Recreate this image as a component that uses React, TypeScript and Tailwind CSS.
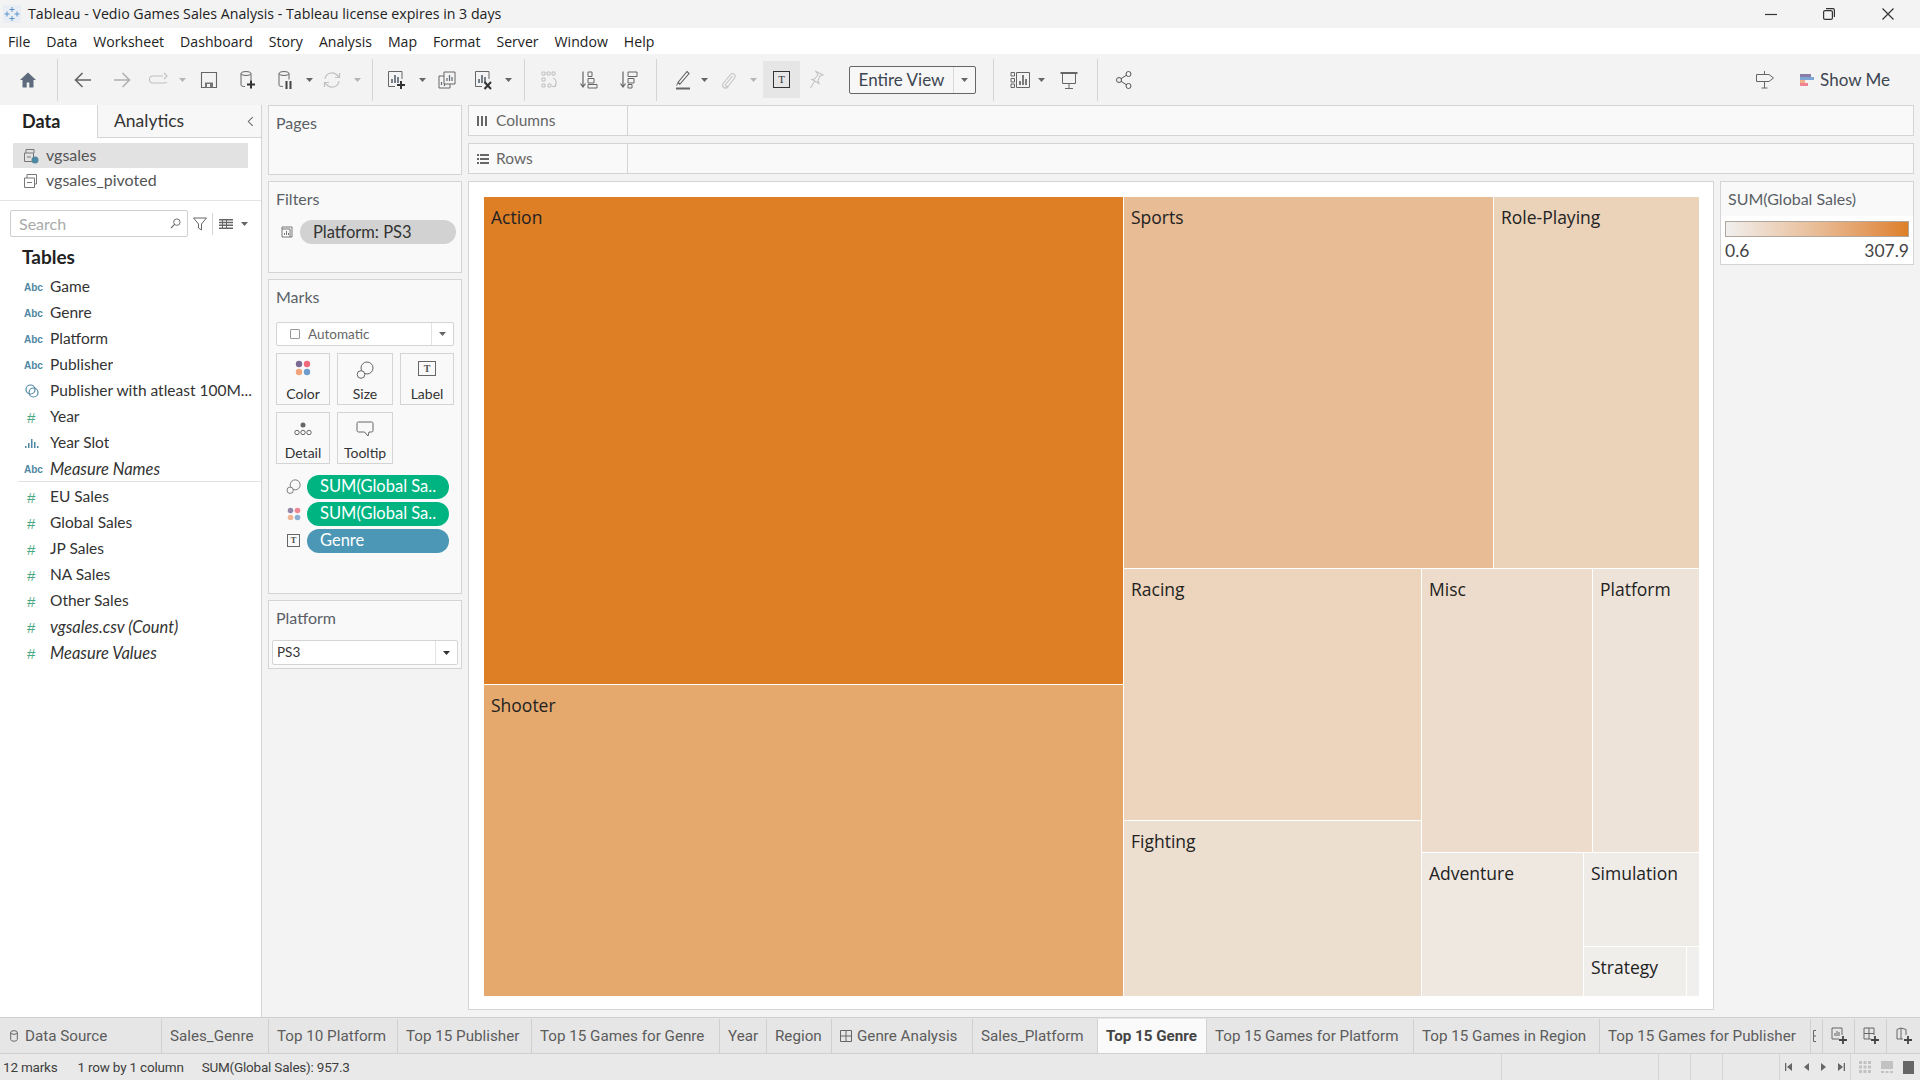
import { ReactNode } from "react";

const book = "font-['Lato','Liberation_Sans',sans-serif]";

const Icon = ({ className = "", children, box = "0 0 20 20" }: { className?: string; children: ReactNode; box?: string }) => (
  <svg viewBox={box} fill="none" className={`shrink-0 ${className}`}>
    {children}
  </svg>
);

const Caret = ({ className = "", light = false }: { className?: string; light?: boolean }) => (
  <svg viewBox="0 0 7 4" className={`h-[4px] w-[7px] shrink-0 ${className}`}>
    <path d="M0 0h7L3.500 4z" fill={light ? "#b5b5b5" : "#666"} />
  </svg>
);

const Divider = ({ className = "" }: { className?: string }) => <div className={`h-[42px] w-px shrink-0 bg-[#d4d4d4] ${className}`} />;

const Toolbar = () => (
  <div className="flex h-[51px] items-center bg-[#f3f3f3] pr-[30px]">
    <Icon className="ml-[18px] h-5 w-5">
      <path d="M10 2.500 2 10h2.500v7.500h4.200v-5h2.600v5h4.200V10H18z" fill="#5d6b7c" />
    </Icon>
    <Divider className="ml-[19px]" />
    <Icon className="ml-[15px] h-5 w-5">
      <path d="M18 10H3M9.500 3 2.500 10l7 7" stroke="#666" strokeWidth="1.600" />
    </Icon>
    <Icon className="ml-[19px] h-5 w-5">
      <path d="M2 10h15M10.500 3l7 7-7 7" stroke="#b0b0b0" strokeWidth="1.600" />
    </Icon>
    <Icon className="ml-[17px] h-5 w-5">
      <path d="M14 6H4a3 3 0 0 0 0 7h12a3 3 0 0 0 2-1M15 3l3 3-3 3" stroke="#c0c0c0" strokeWidth="1.100" />
    </Icon>
    <Caret light className="ml-[10px]" />
    <Icon className="ml-[13px] h-5 w-5">
      <path d="M2.500 2.500h15v15h-15z" stroke="#666" strokeWidth="1.100" />
      <path d="M6 12.500h8v5H6z" fill="#777" />
      <path d="M8 14h3v3H8z" fill="#f3f3f3" />
    </Icon>
    <Icon className="ml-[19px] h-5 w-5">
      <ellipse cx="8" cy="3.500" rx="5" ry="2" stroke="#666" />
      <path d="M3 3.500v11.500c0 1 1.500 1.500 4 1.500M13 3.500v7" stroke="#666" />
      <path d="M13 10.500v8M9 14.500h8" stroke="#333" strokeWidth="2" />
    </Icon>
    <Icon className="ml-[18px] h-5 w-5">
      <ellipse cx="8" cy="3.500" rx="5" ry="2" stroke="#666" />
      <path d="M3 3.500v11.500c0 1 1.500 1.500 4 1.500M13 3.500v6" stroke="#666" />
      <path d="M10.500 11v8M14.500 11v8" stroke="#444" strokeWidth="2" />
    </Icon>
    <Caret className="ml-[10px]" />
    <Icon className="ml-[9px] h-5 w-5">
      <path d="M3 9a7 7 0 0 1 12-4l2 2M17 11a7 7 0 0 1-12 4l-2-2" stroke="#c0c0c0" strokeWidth="1.200" />
      <path d="M17.500 3v4.500H13M2.500 17v-4.500H7" stroke="#c0c0c0" strokeWidth="1.200" />
    </Icon>
    <Caret light className="ml-[12px]" />
    <Divider className="ml-[11px]" />
    <Icon className="ml-[14px] h-5 w-5">
      <path d="M15 9V1.500H1.500v15H8" stroke="#666" />
      <path d="M5 13V9M8 13V5M11 13V7" stroke="#4e5a66" strokeWidth="1.500" />
      <path d="M14 11v8M10 15h8" stroke="#333" strokeWidth="2" />
    </Icon>
    <Caret className="ml-[12px]" />
    <Icon className="ml-[11px] h-5 w-5">
      <path d="M7 6h-5v12h11v-4" stroke="#666" />
      <path d="M7 2h11v12H7z" stroke="#666" />
      <path d="M10 11V8M12.500 11V5M15 11V7M4.500 15v-3M7.500 16v-2" stroke="#5c6873" strokeWidth="1.200" />
    </Icon>
    <Icon className="ml-[17px] h-5 w-5">
      <path d="M15 9V1.500H1.500v15H8" stroke="#666" />
      <path d="M5 13V9M8 13V5M11 13V7" stroke="#4e5a66" strokeWidth="1.500" />
      <path d="m10.500 12 6.500 7M17 12l-6.500 7" stroke="#333" strokeWidth="2" />
    </Icon>
    <Caret className="ml-[11px]" />
    <Divider className="ml-[12px]" />
    <Icon className="ml-[15px] h-5 w-5">
      <path d="M2 2h3v3H2zM7 2h3v3H7zM12 2h3v3h-3zM2 8h3v3H2zM2 14h3v3H2zM8 14h3v3H8z" stroke="#bbb" strokeWidth="0.900" />
      <path d="M13 8c3 1 4 4 2 8M16 14l-1 3-3-1" stroke="#bbb" />
    </Icon>
    <Icon className="ml-[19px] h-5 w-5">
      <path d="M4 1.500v15M1.500 13.500 4 17l2.500-3.500" stroke="#666" strokeWidth="1.200" />
      <path d="M9 2h4v4.500H9zM9 8.500h6V13H9zM9 14.500h9V18H9z" stroke="#666" />
    </Icon>
    <Icon className="ml-[20px] h-5 w-5">
      <path d="M4 1.500v15M1.500 13.500 4 17l2.500-3.500" stroke="#666" strokeWidth="1.200" />
      <path d="M9 2h9v4.500H9zM9 8.500h6V13H9zM9 14.500h4V18H9z" stroke="#666" />
    </Icon>
    <Divider className="ml-[17px]" />
    <Icon className="ml-[16px] h-5 w-5">
      <path d="m14 1.500 2 2L7 14l-2-1.500z" stroke="#666" strokeWidth="1.100" />
      <path d="M3.500 15.500 5 13l2 1.500" stroke="#666" />
      <path d="M3 17.500h14v2H3z" fill="#666" />
    </Icon>
    <Caret className="ml-[8px]" />
    <Icon className="ml-[11px] h-5 w-5">
      <path d="M13.500 6 7 14c-1.500 2 1 3.500 2.500 2l6-8c2.500-3-1.500-6-4-3.500L4.500 13c-2.500 3 1 7 4.500 4" stroke="#c4c4c4" strokeWidth="1.100" />
    </Icon>
    <Caret light className="ml-[11px]" />
    <div className="ml-[6px] flex h-[37px] w-[37px] shrink-0 items-center justify-center bg-[#e6e6e6]">
      <div className="flex h-[17px] w-[17px] items-center justify-center border border-[#333] font-['Liberation_Serif',serif] text-[11px] leading-none text-[#333]">T</div>
    </div>
    <Icon className="ml-[7px] h-5 w-5">
      <path d="M9 1.500 16 5l-3 1-2 5 1 2.500-7-4 2.500-.5L11 5zM7.500 11.500 3.500 18" stroke="#c4c4c4" strokeWidth="1.100" />
    </Icon>
    <div className="ml-[22px] flex h-[28px] w-[127px] shrink-0 items-center rounded-[2px] border border-[#666] bg-[#f7f7f7]">
      <span className={`flex-1 text-center text-[17px] text-[#3d4650] ${book}`}>Entire View</span>
      <span className="flex h-full w-[22px] items-center justify-center border-l border-[#d9d9d9]">
        <Caret />
      </span>
    </div>
    <Divider className="ml-[17px]" />
    <Icon className="ml-[16px] h-5 w-5">
      <path d="M1 2.500h3.500V6H1zM1 8.500h3.500V12H1zM1 14h3.500v3.500H1zM6.500 2.500h13v15h-13z" stroke="#666" />
      <path d="M10 15v-4M13 15V5M16 15V9" stroke="#555" strokeWidth="1.500" />
    </Icon>
    <Caret className="ml-[8px]" />
    <Icon className="ml-[14px] h-5 w-5">
      <path d="M1.500 2h17v2h-17z" fill="#666" />
      <path d="M3.500 4v9.500h13V4M10 13.500v5M6 18.500h8" stroke="#666" />
    </Icon>
    <Divider className="ml-[18px]" />
    <Icon className="ml-[16px] h-5 w-5">
      <circle cx="14.500" cy="4" r="2.500" stroke="#555" />
      <circle cx="5" cy="10" r="2.500" stroke="#555" />
      <circle cx="14.500" cy="16" r="2.500" stroke="#555" />
      <path d="m7 8.700 5.500-3.500M7 11.300l5.500 3.500" stroke="#555" />
    </Icon>
    <Icon className="ml-auto h-5 w-5">
      <path d="M1.500 4.500H14l4.500 3.500-4.500 3.500H1.500z" stroke="#666" />
      <path d="M9.500 1v3.500M9.500 11.500V18M6.500 18h6" stroke="#666" />
    </Icon>
    <div className="ml-[25px] flex items-center gap-[6px]">
      <div className="flex w-[14px] flex-col">
        <div className="h-[3px] w-[11px] bg-[#8a7ca8]" />
        <div className="h-[3px] w-[14px] bg-[#7ea6d4]" />
        <div className="h-[3px] w-[5px] bg-[#f0b08a]" />
        <div className="h-[3px] w-[8px] bg-[#ef8391]" />
      </div>
      <span className={`text-[17px] text-[#3d4650] ${book}`}>Show Me</span>
    </div>
  </div>
);

const AbcIcon = () => <span className="w-[16px] font-['Liberation_Sans',sans-serif] text-[10px] font-bold text-[#4e87a2]">Abc</span>;
const HashIcon = () => <span className="w-[16px] pl-[3px] font-['Liberation_Sans',sans-serif] text-[15px] leading-none text-[#4aa882]">#</span>;

const fieldsTop = [
  { label: "Game", icon: <AbcIcon /> },
  { label: "Genre", icon: <AbcIcon /> },
  { label: "Platform", icon: <AbcIcon /> },
  { label: "Publisher", icon: <AbcIcon /> },
  {
    label: "Publisher with atleast 100M...",
    icon: (
      <svg viewBox="0 0 16 16" fill="none" className="h-[16px] w-[16px]">
        <circle cx="6.500" cy="6.500" r="4.500" stroke="#4e87a2" strokeWidth="1.200" />
        <circle cx="9.500" cy="9.500" r="4.500" stroke="#4e87a2" strokeWidth="1.200" />
      </svg>
    ),
  },
  { label: "Year", icon: <HashIcon /> },
  {
    label: "Year Slot",
    icon: (
      <svg viewBox="0 0 16 16" fill="#4e87a2" className="h-[16px] w-[16px]">
        <path d="M1 11h1.500v2H1zM4 8h1.500v5H4zM7 4h1.500v9H7zM10 7h1.500v6H10zM13 11h1.500v2H13z" />
      </svg>
    ),
  },
  { label: "Measure Names", icon: <AbcIcon />, italic: true },
];

const fieldsBottom = [
  { label: "EU Sales" },
  { label: "Global Sales" },
  { label: "JP Sales" },
  { label: "NA Sales" },
  { label: "Other Sales" },
  { label: "vgsales.csv (Count)", italic: true },
  { label: "Measure Values", italic: true },
];

const FieldRow = ({ label, icon, italic }: { label: string; icon: ReactNode; italic?: boolean }) => (
  <div className="flex h-[26px] items-center pl-[24px]">
    <div className="flex w-[26px] items-center">{icon}</div>
    <span className={`truncate text-[#333] ${italic ? "text-[16.500px] italic" : "text-[15.500px]"}`}>{label}</span>
  </div>
);

const DataPane = () => (
  <aside className={`flex w-[262px] shrink-0 flex-col border-r border-[#d4d4d4] bg-white ${book}`}>
    <div className="flex h-[33px] shrink-0">
      <div className="flex w-[97px] items-center pl-[22px] text-[18px] font-bold text-[#222]">Data</div>
      <div className="flex flex-1 items-center justify-between border-b border-l border-[#d4d4d4] bg-[#f7f7f7] pr-[7px] pl-[16px] text-[17.500px] text-[#333]">
        Analytics
        <svg viewBox="0 0 8 12" fill="none" className="h-[11px] w-[7px]">
          <path d="M6.500 1 1.500 6l5 5" stroke="#666" strokeWidth="1.200" />
        </svg>
      </div>
    </div>
    <div className="mx-[13px] mt-[5px] flex h-[25px] items-center bg-[#e2e2e2] pl-[10px] text-[16px] text-[#555]">
      <svg viewBox="0 0 16 16" fill="none" className="mr-[7px] h-[16px] w-[16px]">
        <path d="M3 5V1.500h8V5M1.500 5h9v8.500h-9zM4 9h4" stroke="#777" />
        <circle cx="12" cy="12" r="3.500" fill="#4e87a2" />
      </svg>
      <span className="mt-[-1px]">vgsales</span>
    </div>
    <div className="mx-[13px] flex h-[25px] items-center pl-[10px] text-[16px] text-[#555]">
      <svg viewBox="0 0 16 16" fill="none" className="mr-[7px] h-[16px] w-[16px]">
        <path d="M4 5V1.500h9.500V11h-2M1.500 5h10v9.500h-10zM4 9.500h5" stroke="#777" />
      </svg>
      <span className="mt-[-1px]">vgsales_pivoted</span>
    </div>
    <div className="mt-[7px] border-t border-[#e3e3e3]" />
    <div className="mt-[9px] flex items-center pl-[10px]">
      <div className="flex h-[27px] w-[178px] items-center justify-between rounded-[2px] border border-[#cfcfcf] pr-[6px] pl-[8px] text-[16px] text-[#aaa]">
        Search
        <svg viewBox="0 0 12 12" fill="none" className="h-[11px] w-[11px]">
          <circle cx="7.500" cy="4.500" r="3.500" stroke="#666" />
          <path d="M5 7 1 11" stroke="#666" strokeWidth="1.300" />
        </svg>
      </div>
      <svg viewBox="0 0 14 14" fill="none" className="ml-[5px] h-[14px] w-[14px]">
        <path d="M.5 1h13L8.500 7v6l-3-2V7z" stroke="#666" />
      </svg>
      <div className="ml-[5px] h-[22px] w-px bg-[#d4d4d4]" />
      <svg viewBox="0 0 14 10" fill="#666" className="ml-[6px] h-[10px] w-[14px]">
        <path d="M0 0h14v1.500H0zM0 2.800h14v1.500H0zM0 5.600h14v1.500H0zM0 8.400h14V10H0zM3 0h1v10H3zM7 0h1v10H7z" />
      </svg>
      <Caret className="ml-[8px]" />
    </div>
    <div className="mt-[8px] pl-[22px] text-[19px] leading-[24px] font-bold text-[#222]">Tables</div>
    <div className="mt-[5px]">
      {fieldsTop.map((f) => (
        <FieldRow key={f.label} label={f.label} icon={f.icon} italic={f.italic} />
      ))}
    </div>
    <div className="mt-[-1px] ml-[18px] border-t border-[#e3e3e3]" />
    <div className="mt-[2px]">
      {fieldsBottom.map((f) => (
        <FieldRow key={f.label} label={f.label} icon={<HashIcon />} italic={f.italic} />
      ))}
    </div>
  </aside>
);

const CardTitle = ({ children }: { children: ReactNode }) => <div className="px-[7px] text-[16px] leading-[20px] text-[#5a5f66]">{children}</div>;

const markButton = "flex h-[52px] flex-col items-center justify-between border border-[#d4d4d4] pt-[6px] pb-[1px] text-[14px] leading-[18px] text-[#333]";

const ColorDots = ({ className = "" }: { className?: string }) => (
  <svg viewBox="0 0 16 16" className={className}>
    <circle cx="4" cy="4" r="3.200" fill="#7b6a94" />
    <circle cx="12" cy="4" r="3.200" fill="#ee6a7c" />
    <circle cx="4" cy="12" r="3.200" fill="#f2a57c" />
    <circle cx="12" cy="12" r="3.200" fill="#6f9ccb" />
  </svg>
);

const SizeCircles = ({ className = "" }: { className?: string }) => (
  <svg viewBox="0 0 18 18" fill="none" className={className}>
    <circle cx="11" cy="7" r="6" stroke="#666" />
    <circle cx="5" cy="13.500" r="3.800" stroke="#666" fill="#f9f9f9" />
  </svg>
);

const LabelBox = ({ className = "" }: { className?: string }) => (
  <div className={`flex items-center justify-center border border-[#666] font-['Liberation_Serif',serif] leading-none font-bold text-[#555] ${className}`}>T</div>
);

const Pill = ({ icon, label, color }: { icon: ReactNode; label: string; color: string }) => (
  <div className="flex h-[27px] items-center">
    <div className="flex w-[38px] justify-center pl-[11px]">{icon}</div>
    <div className={`flex h-[24px] w-[142px] items-center rounded-full pl-[13px] text-[16.500px] text-white ${color}`}>{label}</div>
  </div>
);

const Cards = () => (
  <div className={`flex w-[194px] shrink-0 flex-col ${book}`}>
    <section className="h-[70px] border border-[#d4d4d4] bg-[#f9f9f9] pt-[7px]">
      <CardTitle>Pages</CardTitle>
    </section>
    <section className="mt-[6px] h-[92px] border border-[#d4d4d4] bg-[#f9f9f9] pt-[7px]">
      <CardTitle>Filters</CardTitle>
      <div className="mt-[11px] flex items-center">
        <svg viewBox="0 0 12 12" fill="none" className="ml-[12px] h-[12px] w-[12px]">
          <path d="M1 3V1h10v10H9M1 3h8v8H1zM3.500 9V7M5.500 9V5M7.500 9V7" stroke="#777" />
        </svg>
        <div className="ml-[7px] flex h-[24px] w-[156px] items-center rounded-full bg-[#d2d2d2] pl-[13px] text-[16.500px] text-[#333]">Platform: PS3</div>
      </div>
    </section>
    <section className="mt-[6px] h-[315px] border border-[#d4d4d4] bg-[#f9f9f9] pt-[7px]">
      <CardTitle>Marks</CardTitle>
      <div className="mx-[7px] mt-[15px] flex h-[24px] items-center rounded-[2px] border border-[#d4d4d4] bg-white text-[13.500px] text-[#666]">
        <div className="ml-[13px] h-[10px] w-[10px] rounded-[1px] border border-[#999]" />
        <span className="ml-[8px] flex-1">Automatic</span>
        <span className="flex h-full w-[22px] items-center justify-center border-l border-[#e3e3e3]">
          <Caret />
        </span>
      </div>
      <div className="mx-[7px] mt-[7px] grid grid-cols-[54px_56px_54px] gap-x-[7px] gap-y-[7px]">
        <div className={markButton}>
          <ColorDots className="h-[16px] w-[16px]" />
          Color
        </div>
        <div className={markButton}>
          <SizeCircles className="mt-[1px] h-[18px] w-[18px]" />
          Size
        </div>
        <div className={markButton}>
          <LabelBox className="mt-[1px] h-[15px] w-[18px] text-[10px]" />
          Label
        </div>
        <div className={markButton}>
          <svg viewBox="0 0 20 14" fill="none" className="mt-[3px] h-[14px] w-[20px]">
            <circle cx="10" cy="3" r="2.500" fill="#666" />
            <circle cx="4" cy="10.500" r="2.200" stroke="#666" />
            <circle cx="10" cy="10.500" r="2.200" stroke="#666" />
            <circle cx="16" cy="10.500" r="2.200" stroke="#666" />
          </svg>
          Detail
        </div>
        <div className={markButton}>
          <svg viewBox="0 0 18 16" fill="none" className="mt-[2px] h-[16px] w-[18px]">
            <path d="M2.500 1h13A1.500 1.500 0 0 1 17 2.500v7a1.500 1.500 0 0 1-1.500 1.500H13l-1 4-3.500-4h-6A1.500 1.500 0 0 1 1 9.500v-7A1.500 1.500 0 0 1 2.500 1z" stroke="#666" />
          </svg>
          Tooltip
        </div>
      </div>
      <div className="mt-[9px]">
        <Pill icon={<SizeCircles className="h-[15px] w-[15px]" />} label="SUM(Global Sa.." color="bg-[#00b482]" />
        <Pill icon={<ColorDots className="h-[14px] w-[14px] opacity-80" />} label="SUM(Global Sa.." color="bg-[#00b482]" />
        <Pill icon={<LabelBox className="h-[13px] w-[13px] text-[9px]" />} label="Genre" color="bg-[#4b97b5]" />
      </div>
    </section>
    <section className="mt-[6px] h-[69px] border border-[#d4d4d4] bg-[#f9f9f9] pt-[7px]">
      <CardTitle>Platform</CardTitle>
      <div className="mx-[3px] mt-[12px] flex h-[25px] items-center rounded-[2px] border border-[#d4d4d4] bg-white pl-[4px] text-[13.500px] text-[#333]">
        <span className="flex-1">PS3</span>
        <span className="flex h-full w-[22px] items-center justify-center border-l border-[#e3e3e3]">
          <Caret className="brightness-50" />
        </span>
      </div>
    </section>
  </div>
);

const Shelf = ({ label, icon, className = "" }: { label: string; icon: ReactNode; className?: string }) => (
  <div className={`flex h-[31px] border border-[#d4d4d4] bg-[#f9f9f9] ${className}`}>
    <div className={`flex w-[159px] items-center border-r border-[#d4d4d4] pt-[1px] pl-[8px] text-[15.500px] text-[#666] ${book}`}>
      <div className="flex w-[19px] items-center">{icon}</div>
      {label}
    </div>
  </div>
);

const Node = ({ label, className }: { label?: string; className: string }) => (
  <div className={`pt-[7px] pl-[7px] font-['Open_Sans',sans-serif] text-[17.500px] leading-[26px] text-[#222] ${className}`}>{label}</div>
);

const Treemap = () => (
  <div className="flex h-[799px] w-[1215px] gap-px">
    <div className="flex w-[639px] flex-col gap-px">
      <Node label="Action" className="h-[487px] bg-[#de7f26]" />
      <Node label="Shooter" className="flex-1 bg-[#e5a96e]" />
    </div>
    <div className="flex flex-1 flex-col gap-px">
      <div className="flex h-[371px] gap-px">
        <Node label="Sports" className="w-[369px] bg-[#e8bc95]" />
        <Node label="Role-Playing" className="flex-1 bg-[#ebd3ba]" />
      </div>
      <div className="flex flex-1 gap-px">
        <div className="flex w-[297px] flex-col gap-px">
          <Node label="Racing" className="h-[251px] bg-[#ecd5bc]" />
          <Node label="Fighting" className="flex-1 bg-[#eddfd0]" />
        </div>
        <div className="flex flex-1 flex-col gap-px">
          <div className="flex h-[283px] gap-px">
            <Node label="Misc" className="w-[170px] bg-[#eddccb]" />
            <Node label="Platform" className="flex-1 bg-[#eee3d8]" />
          </div>
          <div className="flex flex-1 gap-px">
            <Node label="Adventure" className="w-[161px] bg-[#efe8e1]" />
            <div className="flex flex-1 flex-col gap-px">
              <Node label="Simulation" className="h-[93px] bg-[#efece8]" />
              <div className="flex flex-1 gap-px">
                <Node label="Strategy" className="w-[102px] bg-[#f0eeeb]" />
                <Node className="flex-1 bg-[#f0efee]" />
              </div>
            </div>
          </div>
        </div>
      </div>
    </div>
  </div>
);

const Legend = () => (
  <section className={`ml-[6px] h-[84px] w-[194px] shrink-0 border border-[#d4d4d4] bg-white ${book}`}>
    <div className="flex h-[34px] items-center bg-[#f9f9f9] pl-[7px] text-[16px] text-[#5a5f66]">SUM(Global Sales)</div>
    <div className="mx-[4px] mt-[5px] h-[16px] border border-[#b0a89e] bg-gradient-to-r from-[#f0efee] via-[#e8bc95] to-[#de7f26]" />
    <div className="mx-[4px] mt-[4px] flex justify-between text-[17.500px] leading-[20px] text-[#444]">
      <span>0.6</span>
      <span>307.9</span>
    </div>
  </section>
);

const tabs = [
  { label: "Sales_Genre", w: "w-[107px]" },
  { label: "Top 10 Platform", w: "w-[129px]" },
  { label: "Top 15 Publisher", w: "w-[134px]" },
  { label: "Top 15 Games for Genre", w: "w-[188px]" },
  { label: "Year", w: "w-[47px]" },
  { label: "Region", w: "w-[65px]" },
  { label: "Genre Analysis", w: "w-[141px]", grid: true },
  { label: "Sales_Platform", w: "w-[125px]" },
  { label: "Top 15 Genre", w: "w-[109px]", active: true },
  { label: "Top 15 Games for Platform", w: "w-[207px]" },
  { label: "Top 15 Games in Region", w: "w-[186px]" },
  { label: "Top 15 Games for Publisher", w: "w-[211px]" },
];

const TabBar = () => (
  <div className="flex h-[37px] shrink-0 border-y border-[#d0d0d0] bg-[#e6e6e6] pt-px font-['Roboto',sans-serif] text-[15.200px] text-[#5c5c5c]">
    <div className="flex w-[162px] items-center gap-[7px] border-r border-[#d0d0d0] pl-[10px]">
      <svg viewBox="0 0 8 12" fill="none" className="h-[12px] w-[8px]">
        <ellipse cx="4" cy="2.500" rx="3.300" ry="1.800" stroke="#666" />
        <path d="M.7 2.500v7c0 2.200 6.600 2.200 6.600 0v-7" stroke="#666" />
      </svg>
      Data Source
    </div>
    {tabs.map((t) => (
      <div
        key={t.label}
        className={`flex items-center gap-[5px] border-r border-[#d0d0d0] pl-[8px] ${t.w} ${t.active ? "bg-[#fafafa] font-bold text-[#444]" : ""}`}
      >
        {t.grid && (
          <svg viewBox="0 0 12 12" fill="none" className="h-[12px] w-[12px]">
            <path d="M.5.500h11v11H.5zM6 .5v11M.5 6h11" stroke="#666" />
          </svg>
        )}
        {t.label}
      </div>
    ))}
    <div className="flex w-[12px] items-center border-r border-[#d0d0d0] pl-[2px]">
      <svg viewBox="0 0 3 12" fill="none" className="h-[12px] w-[3px]">
        <path d="M3 .5H.5v11H3M.5 6H3" stroke="#666" />
      </svg>
    </div>
    <div className="flex w-[32px] items-center justify-center border-r border-[#d0d0d0] pl-[2px]">
      <svg viewBox="0 0 18 18" fill="none" className="h-[18px] w-[18px]">
        <path d="M11 8V1H1v11h7" stroke="#666" />
        <path d="M4 9V6M6 9V4M8 9V5" stroke="#666" />
        <path d="M12 9v8M8 13h8" stroke="#444" strokeWidth="1.800" />
      </svg>
    </div>
    <div className="flex w-[32px] items-center justify-center border-r border-[#d0d0d0] pl-[2px]">
      <svg viewBox="0 0 18 18" fill="none" className="h-[18px] w-[18px]">
        <path d="M11 8V1H1v11h7M1 6.500h10M6 1v11" stroke="#666" />
        <path d="M12 9v8M8 13h8" stroke="#444" strokeWidth="1.800" />
      </svg>
    </div>
    <div className="flex flex-1 items-center justify-center pl-[2px]">
      <svg viewBox="0 0 18 18" fill="none" className="h-[18px] w-[18px]">
        <path d="M1 2.500 5 1l5 1.500V8M1 2.500V12h6M5 1v11" stroke="#666" />
        <path d="M12 9v8M8 13h8" stroke="#444" strokeWidth="1.800" />
      </svg>
    </div>
  </div>
);

const StatusBar = () => (
  <div className="flex h-[26px] shrink-0 items-center bg-[#e9e9e9] font-['Roboto',sans-serif] text-[13.500px] tracking-[-0.2px] text-[#3f3f3f]">
    <span className="ml-[3px]">12 marks</span>
    <span className="ml-[20px]">1 row by 1 column</span>
    <span className="ml-[18px]">SUM(Global Sales): 957.3</span>
    <div className="ml-auto flex h-full">
      <div className="w-[157px] border-l border-[#d4d4d4]" />
      <div className="w-[32px] border-l border-[#d4d4d4]" />
      <div className="w-[32px] border-l border-[#d4d4d4]" />
      <div className="w-[57px] border-l border-[#d4d4d4]" />
      <div className="flex w-[71px] items-center justify-center gap-[12px] border-l border-[#d4d4d4]">
        <svg viewBox="0 0 7 8" fill="#666" className="h-[8px] w-[7px]">
          <path d="M0 0h1.300v8H0zM7 0v8L2 4z" />
        </svg>
        <svg viewBox="0 0 5 8" fill="#666" className="h-[8px] w-[5px]">
          <path d="M5 0v8L0 4z" />
        </svg>
        <svg viewBox="0 0 5 8" fill="#666" className="h-[8px] w-[5px]">
          <path d="M0 0v8l5-4z" />
        </svg>
        <svg viewBox="0 0 7 8" fill="#666" className="h-[8px] w-[7px]">
          <path d="M5.700 0H7v8H5.700zM0 0v8l5-4z" />
        </svg>
      </div>
      <div className="flex w-[70px] items-center gap-[10px] border-l border-[#d4d4d4] pl-[8px]">
        <svg viewBox="0 0 12 12" className="h-[12px] w-[12px]" fill="#c2c2c2">
          <path d="M0 0h3v3H0zM4.500 0h3v3h-3zM9 0h3v3H9zM0 4.500h3v3H0zM4.500 4.500h3v3h-3zM9 4.500h3v3H9zM0 9h3v3H0zM4.500 9h3v3h-3zM9 9h3v3H9z" />
        </svg>
        <svg viewBox="0 0 12 12" className="h-[12px] w-[12px]" fill="#c2c2c2">
          <path d="M0 0h12v8H0zM0 10h3v2H0zM4.500 10h3v2h-3zM9 10h3v2H9z" />
        </svg>
        <div className="h-[13px] w-[11px] bg-[#666]" />
      </div>
    </div>
  </div>
);

export default function App() {
  return (
    <main className="flex h-[1080px] w-[1920px] flex-col overflow-hidden bg-[#f3f3f3]">
      <header className="flex h-[28px] shrink-0 items-center bg-[#f3f3f3] pr-[26px] pl-[3px] font-['Open_Sans',sans-serif] text-[14.200px] text-[#222]">
        <svg viewBox="0 0 18 18" className="h-[18px] w-[18px]">
          <path d="M0 0h18v18H0z" fill="#e9eef4" />
          <path d="M8.500 2h1v5h-1zM6.500 4h5v1h-5zM8.500 11h1v5h-1zM6.500 13h5v1h-5zM3.500 6.500h1v5h-1zM1.500 8.500h5v1h-5zM13.500 6.500h1v5h-1zM11.500 8.500h5v1h-5z" fill="#5b93c7" />
        </svg>
        <span className="ml-[7px] flex-1">Tableau - Vedio Games Sales Analysis - Tableau license expires in 3 days</span>
        <svg viewBox="0 0 12 12" fill="none" className="h-[12px] w-[12px]">
          <path d="M0 6.500h12" stroke="#333" strokeWidth="1.200" />
        </svg>
        <svg viewBox="0 0 12 12" fill="none" className="ml-[46px] h-[12px] w-[12px]">
          <rect x="0.600" y="2.600" width="8.800" height="8.800" rx="1.500" stroke="#333" strokeWidth="1.200" />
          <path d="M3 .6h7a1.500 1.500 0 0 1 1.400 1.400V9" stroke="#333" strokeWidth="1.200" />
        </svg>
        <svg viewBox="0 0 12 12" fill="none" className="ml-[47px] h-[12px] w-[12px]">
          <path d="m.5.500 11 11M11.500.5l-11 11" stroke="#333" strokeWidth="1.200" />
        </svg>
      </header>
      <nav className="flex h-[26px] shrink-0 items-center gap-[16px] bg-white pt-[2px] pl-[8px] font-['Open_Sans',sans-serif] text-[14.100px] text-[#222]">
        {["File", "Data", "Worksheet", "Dashboard", "Story", "Analysis", "Map", "Format", "Server", "Window", "Help"].map((m) => (
          <span key={m}>{m}</span>
        ))}
      </nav>
      <Toolbar />
      <div className="flex min-h-0 flex-1">
        <DataPane />
        <div className="ml-[6px]">
          <Cards />
        </div>
        <div className="ml-[6px] flex flex-1 flex-col pr-[7px] pb-[7px]">
          <Shelf
            label="Columns"
            icon={
              <svg viewBox="0 0 10 10" fill="#666" className="h-[10px] w-[10px]">
                <path d="M0 0h2v10H0zM4 0h2v10H4zM8 0h2v10H8z" />
              </svg>
            }
          />
          <Shelf
            className="mt-[7px]"
            label="Rows"
            icon={
              <svg viewBox="0 0 12 10" fill="#666" className="h-[10px] w-[12px]">
                <path d="M0 0h2v2H0zM3 0h9v2H3zM0 4h2v2H0zM3 4h9v2H3zM0 8h2v2H0zM3 8h9v2H3z" />
              </svg>
            }
          />
          <div className="mt-[7px] flex min-h-0 flex-1 items-start">
            <section className="h-full w-[1246px] shrink-0 border border-[#d4d4d4] bg-white pt-[15px] pl-[15px]">
              <Treemap />
            </section>
            <Legend />
          </div>
        </div>
      </div>
      <TabBar />
      <StatusBar />
    </main>
  );
}
